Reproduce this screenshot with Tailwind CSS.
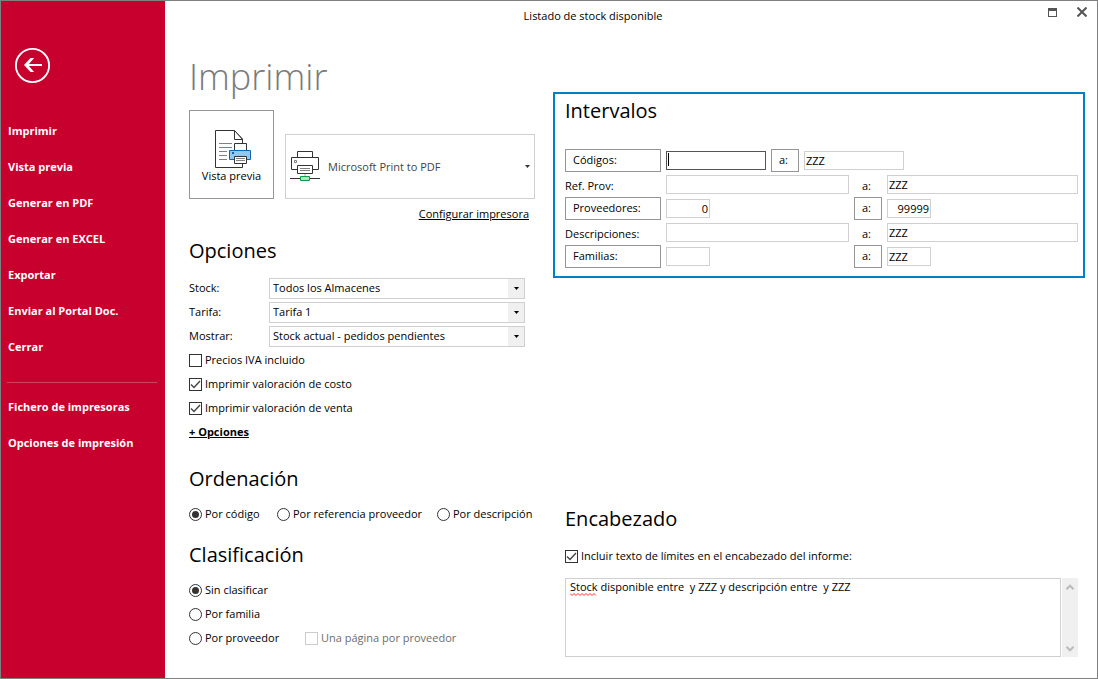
<!DOCTYPE html>
<html lang="es">
<head>
<meta charset="utf-8">
<meta name="viewport" content="width=device-width, initial-scale=1">
<title>Listado de stock disponible</title>
<script src="https://cdn.jsdelivr.net/npm/@tailwindcss/browser@4"></script>
</head>
<body class="bg-white font-['Open_Sans','Noto_Sans',sans-serif] text-[11px] leading-4 text-black">
<div class="flex min-h-screen border border-[#808080]">

  <aside class="w-[164px] shrink-0 bg-[#c8002d] pt-[46px] text-white">
    <button type="button" aria-label="Volver" class="ml-[13px] block">
      <svg width="37" height="37" viewBox="0 0 37 37" fill="none" stroke="#fff">
        <circle cx="18.500" cy="18.500" r="16.600" stroke-width="1.900"/>
        <path d="M28 18H12" stroke-width="2"/>
        <path d="M16.500 11h3.600l-6 7 6 7h-3.600l-6.500-7z" fill="#fff" stroke="none"/>
      </svg>
    </button>
    <nav class="mt-[29px] font-bold">
      <ul>
        <li><a href="#" class="flex h-9 items-center pl-[7px]">Imprimir</a></li>
        <li><a href="#" class="flex h-9 items-center pl-[7px]">Vista previa</a></li>
        <li><a href="#" class="flex h-9 items-center pl-[7px]">Generar en PDF</a></li>
        <li><a href="#" class="flex h-9 items-center pl-[7px]">Generar en EXCEL</a></li>
        <li><a href="#" class="flex h-9 items-center pl-[7px]">Exportar</a></li>
        <li><a href="#" class="flex h-9 items-center pl-[7px]">Enviar al Portal Doc.</a></li>
        <li><a href="#" class="flex h-9 items-center pl-[7px]">Cerrar</a></li>
      </ul>
      <hr class="mt-[17px] mr-2 mb-[6px] ml-[6px] border-[#d84060]">
      <ul>
        <li><a href="#" class="flex h-9 items-center pl-[7px]">Fichero de impresoras</a></li>
        <li><a href="#" class="flex h-9 items-center pl-[7px]">Opciones de impresión</a></li>
      </ul>
    </nav>
  </aside>

  <main class="min-w-0 flex-1">
    <header class="flex h-[30px]">
      <div class="flex-1 pt-[7px] text-center">Listado de stock disponible</div>
      <div class="flex w-[76px] justify-end">
        <button type="button" aria-label="Maximizar" class="flex h-[22px] w-[30px] items-center justify-center">
          <svg width="9" height="9" viewBox="0 0 9 9" fill="#555"><path fill-rule="evenodd" d="M0 0h9v9H0zM1 3v5h7V3z"/></svg>
        </button>
        <button type="button" aria-label="Cerrar" class="flex h-[22px] w-[30px] items-center justify-center">
          <svg width="10" height="10" viewBox="0 0 10 10" stroke="#555" stroke-width="2"><path d="M.5.5l9 9M9.500.5l-9 9"/></svg>
        </button>
      </div>
    </header>

    <div class="flex">
      <section class="w-[388px] shrink-0 pl-6">
        <h1 class="mt-[22px] text-[36px] leading-[48px] font-light text-[#7a7a7a]">Imprimir</h1>
        <div class="mt-[9px] flex w-[346px] items-end justify-between">
          <button type="button" class="flex h-[89px] w-[85px] flex-col items-center border border-[#969696] pt-[19px]">
            <svg class="ml-1 shrink-0" width="37" height="38" viewBox="0 0 37 38" fill="none">
              <path d="M.5.5h19l8 8.500V37.500H.5z" fill="#fff" stroke="#333"/>
              <path d="M19.500.5v9h8z" fill="#fff" stroke="#333"/>
              <path d="M4 13.500h13M4 17.500h13M4 21.500h8M4 25.500h8M4 29.500h8" stroke="#808080"/>
              <path d="M19.500 20.500v-7h12v7" fill="#fff" stroke="#333"/>
              <path d="M14.500 20.500h21v9h-21z" fill="#92c8f0" stroke="#0e67b4"/>
              <path d="M17 22h2v2h-2z" fill="#0e67b4"/>
              <path d="M19.500 26.500h12v7h-12z" fill="#fff" stroke="#333"/>
              <path d="M21 28.500h9M21 30.500h9" stroke="#808080"/>
            </svg>
            <span>Vista previa</span>
          </button>
          <div class="relative">
            <select aria-label="Impresora" class="h-[65px] w-[250px] appearance-none border border-[#d0d0d0] bg-white pl-[42px] text-[#444]"><option>Microsoft Print to PDF</option></select>
            <svg class="pointer-events-none absolute top-4 left-[5px]" width="30" height="31" viewBox="0 0 30 31" fill="none">
              <path d="M7.500 7.500v-6h15v6" fill="#fff" stroke="#333"/>
              <path d="M1.500 7.500h27v12h-27z" fill="#fff" stroke="#333"/>
              <path d="M4.500 10.500h2v2h-2z" stroke="#808080"/>
              <path d="M7.500 15.500h15v8h-15z" fill="#fff" stroke="#333"/>
              <path d="M10 18.500h10M10 20.500h10" stroke="#808080"/>
              <path d="M15 24v3" stroke="#aaa"/>
              <path d="M0 28.500h30" stroke="#333"/>
              <path d="M10.500 26.500h9v4h-9z" fill="#b5dfbd" stroke="#119a45"/>
            </svg>
            <svg class="pointer-events-none absolute top-[31px] right-[5px]" width="5" height="3" viewBox="0 0 5 3" fill="#333"><path d="M0 0h5L2.500 3z"/></svg>
          </div>
        </div>
        <div class="mt-[7px] w-[340px] text-right"><a href="#" class="underline">Configurar impresora</a></div>

        <h2 class="mt-[13px] text-xl leading-8">Opciones</h2>
        <div class="mt-[9px] w-[336px]">
          <div class="flex h-6 items-center">
            <label for="stock" class="w-20">Stock:</label>
            <div class="relative flex-1">
              <select id="stock" class="block h-[21px] w-full appearance-none border border-[#d0d0d0] bg-white pl-[3px]"><option>Todos los Almacenes</option></select>
              <span class="pointer-events-none absolute inset-y-px right-px flex w-4 items-center justify-center bg-[#f0f0f0]"><svg width="5" height="3" viewBox="0 0 5 3"><path d="M0 0h5L2.500 3z"/></svg></span>
            </div>
          </div>
          <div class="flex h-6 items-center">
            <label for="tarifa" class="w-20">Tarifa:</label>
            <div class="relative flex-1">
              <select id="tarifa" class="block h-[21px] w-full appearance-none border border-[#d0d0d0] bg-white pl-[3px]"><option>Tarifa 1</option></select>
              <span class="pointer-events-none absolute inset-y-px right-px flex w-4 items-center justify-center bg-[#f0f0f0]"><svg width="5" height="3" viewBox="0 0 5 3"><path d="M0 0h5L2.500 3z"/></svg></span>
            </div>
          </div>
          <div class="flex h-6 items-center">
            <label for="mostrar" class="w-20">Mostrar:</label>
            <div class="relative flex-1">
              <select id="mostrar" class="block h-[21px] w-full appearance-none border border-[#d0d0d0] bg-white pl-[3px]"><option>Stock actual - pedidos pendientes</option></select>
              <span class="pointer-events-none absolute inset-y-px right-px flex w-4 items-center justify-center bg-[#f0f0f0]"><svg width="5" height="3" viewBox="0 0 5 3"><path d="M0 0h5L2.500 3z"/></svg></span>
            </div>
          </div>
          <label class="flex h-6 items-center gap-[3px]">
            <input type="checkbox" class="size-[13px] appearance-none border border-[#333]">Precios IVA incluido
          </label>
          <label class="flex h-6 items-center gap-[3px]">
            <span class="relative"><input type="checkbox" checked class="peer block size-[13px] appearance-none border border-[#333]"><svg class="pointer-events-none absolute inset-0 hidden peer-checked:block" width="13" height="13" viewBox="0 0 13 13" fill="none" stroke="#444" stroke-width="1.400"><path d="M2 6.500l3 3 6-6.500"/></svg></span>Imprimir valoración de costo
          </label>
          <label class="flex h-6 items-center gap-[3px]">
            <span class="relative"><input type="checkbox" checked class="peer block size-[13px] appearance-none border border-[#333]"><svg class="pointer-events-none absolute inset-0 hidden peer-checked:block" width="13" height="13" viewBox="0 0 13 13" fill="none" stroke="#444" stroke-width="1.400"><path d="M2 6.500l3 3 6-6.500"/></svg></span>Imprimir valoración de venta
          </label>
          <div class="flex h-6 items-center"><a href="#" class="font-bold underline">+ Opciones</a></div>
        </div>

        <h2 class="mt-[19px] text-xl leading-8">Ordenación</h2>
        <div class="mt-[7px] flex h-6 items-center whitespace-nowrap">
          <label class="flex w-[88px] items-center gap-[3px]"><input type="radio" name="orden" checked class="size-[13px] shrink-0 appearance-none rounded-full border border-[#333] bg-clip-content p-[2px] checked:bg-[#333]">Por código</label>
          <label class="flex w-40 items-center gap-[3px]"><input type="radio" name="orden" class="size-[13px] shrink-0 appearance-none rounded-full border border-[#333] bg-clip-content p-[2px] checked:bg-[#333]">Por referencia proveedor</label>
          <label class="flex items-center gap-[3px]"><input type="radio" name="orden" class="size-[13px] shrink-0 appearance-none rounded-full border border-[#333] bg-clip-content p-[2px] checked:bg-[#333]">Por descripción</label>
        </div>

        <h2 class="mt-[13px] text-xl leading-8">Clasificación</h2>
        <div class="mt-[7px]">
          <label class="flex h-6 items-center gap-[3px]"><input type="radio" name="clase" checked class="size-[13px] appearance-none rounded-full border border-[#333] bg-clip-content p-[2px] checked:bg-[#333]">Sin clasificar</label>
          <label class="flex h-6 items-center gap-[3px]"><input type="radio" name="clase" class="size-[13px] appearance-none rounded-full border border-[#333] bg-clip-content p-[2px] checked:bg-[#333]">Por familia</label>
          <div class="flex h-6 items-center">
            <label class="flex w-[116px] items-center gap-[3px]"><input type="radio" name="clase" class="size-[13px] appearance-none rounded-full border border-[#333] bg-clip-content p-[2px] checked:bg-[#333]">Por proveedor</label>
            <label class="flex items-center gap-[3px] text-[#6d6d6d]"><input type="checkbox" disabled class="size-[13px] appearance-none border border-[#ccc]">Una página por proveedor</label>
          </div>
        </div>
      </section>

      <div class="min-w-0 flex-1 pt-[61px] pr-3">
        <section class="border-2 border-[#0080c8] pt-px pr-[5px] pb-2 pl-[10px]">
          <h2 class="text-xl leading-8">Intervalos</h2>
          <div class="mt-[21px] flex h-6 items-center gap-[5px]">
            <button type="button" class="h-[23px] w-24 border border-[#969696] pl-[7px] text-left">Códigos:</button>
            <div class="relative">
              <input type="text" aria-label="Código desde" class="peer block h-[19px] w-[100px] border border-[#555] px-px outline-none">
              <span class="pointer-events-none absolute top-[2px] left-[2px] h-[13px] w-px bg-black peer-focus:hidden"></span>
            </div>
            <button type="button" class="h-[23px] w-7 border border-[#969696] pl-[7px] text-left">a:</button>
            <input type="text" aria-label="Código hasta" value="ZZZ" class="h-[19px] w-[100px] border border-[#d0d0d0] px-px">
          </div>
          <div class="grid auto-rows-[24px] grid-cols-[96px_183fr_28px_191fr] items-center gap-x-[5px]">
            <label for="ref" class="pt-1">Ref. Prov:</label>
            <input id="ref" type="text" class="h-[19px] w-full border border-[#d0d0d0] px-px">
            <label for="ref2" class="pt-1 pl-2">a:</label>
            <input id="ref2" type="text" value="ZZZ" class="h-[19px] w-full border border-[#d0d0d0] px-px">

            <button type="button" class="h-[23px] border border-[#969696] pl-[7px] text-left">Proveedores:</button>
            <input type="text" aria-label="Proveedor desde" value="0" class="h-[19px] w-11 border border-[#d0d0d0] px-px text-right">
            <button type="button" class="h-[23px] border border-[#969696] pl-[7px] text-left">a:</button>
            <input type="text" aria-label="Proveedor hasta" value="99999" class="h-[19px] w-11 border border-[#d0d0d0] px-px text-right">

            <label for="desc" class="pt-1">Descripciones:</label>
            <input id="desc" type="text" class="h-[19px] w-full border border-[#d0d0d0] px-px">
            <label for="desc2" class="pt-1 pl-2">a:</label>
            <input id="desc2" type="text" value="ZZZ" class="h-[19px] w-full border border-[#d0d0d0] px-px">

            <button type="button" class="h-[23px] border border-[#969696] pl-[7px] text-left">Familias:</button>
            <input type="text" aria-label="Familia desde" class="h-[19px] w-11 border border-[#d0d0d0] px-px">
            <button type="button" class="h-[23px] border border-[#969696] pl-[7px] text-left">a:</button>
            <input type="text" aria-label="Familia hasta" value="ZZZ" class="h-[19px] w-11 border border-[#d0d0d0] px-px">
          </div>
        </section>

        <section class="mt-[225px] pr-[7px] pl-3">
          <h2 class="text-xl leading-8">Encabezado</h2>
          <label class="mt-[9px] flex h-6 items-center gap-[3px]">
            <span class="relative"><input type="checkbox" checked class="peer block size-[13px] appearance-none border border-[#333]"><svg class="pointer-events-none absolute inset-0 hidden peer-checked:block" width="13" height="13" viewBox="0 0 13 13" fill="none" stroke="#444" stroke-width="1.400"><path d="M2 6.500l3 3 6-6.500"/></svg></span>Incluir texto de límites en el encabezado del informe:
          </label>
          <div class="relative mt-[10px] flex gap-px">
            <textarea aria-label="Texto del encabezado" spellcheck="false" class="block h-[79px] min-w-0 flex-1 resize-none overflow-hidden border border-[#d0d0d0] px-1">Stock disponible entre  y ZZZ y descripción entre  y ZZZ</textarea>
            <div class="flex w-4 flex-col justify-between bg-[#f0f0f0]">
              <button type="button" aria-label="Subir" class="flex h-[18px] w-full items-center justify-center"><svg width="8" height="6" viewBox="0 0 8 6" fill="none" stroke="#bbb" stroke-width="2"><path d="M.5 5.200L4 1.700l3.500 3.500"/></svg></button>
              <button type="button" aria-label="Bajar" class="flex h-4 w-full items-center justify-center"><svg width="8" height="6" viewBox="0 0 8 6" fill="none" stroke="#bbb" stroke-width="2"><path d="M.5.800L4 4.300 7.500.800"/></svg></button>
            </div>
            <svg class="pointer-events-none absolute top-[15px] left-[5px]" width="28" height="3" viewBox="0 0 28 3" fill="none" stroke="#f00" stroke-width=".8"><path d="M0 .5l2 2 2-2 2 2 2-2 2 2 2-2 2 2 2-2 2 2 2-2 2 2 2-2 2 2"/></svg>
          </div>
        </section>
      </div>
    </div>
  </main>
</div>
</body>
</html>
